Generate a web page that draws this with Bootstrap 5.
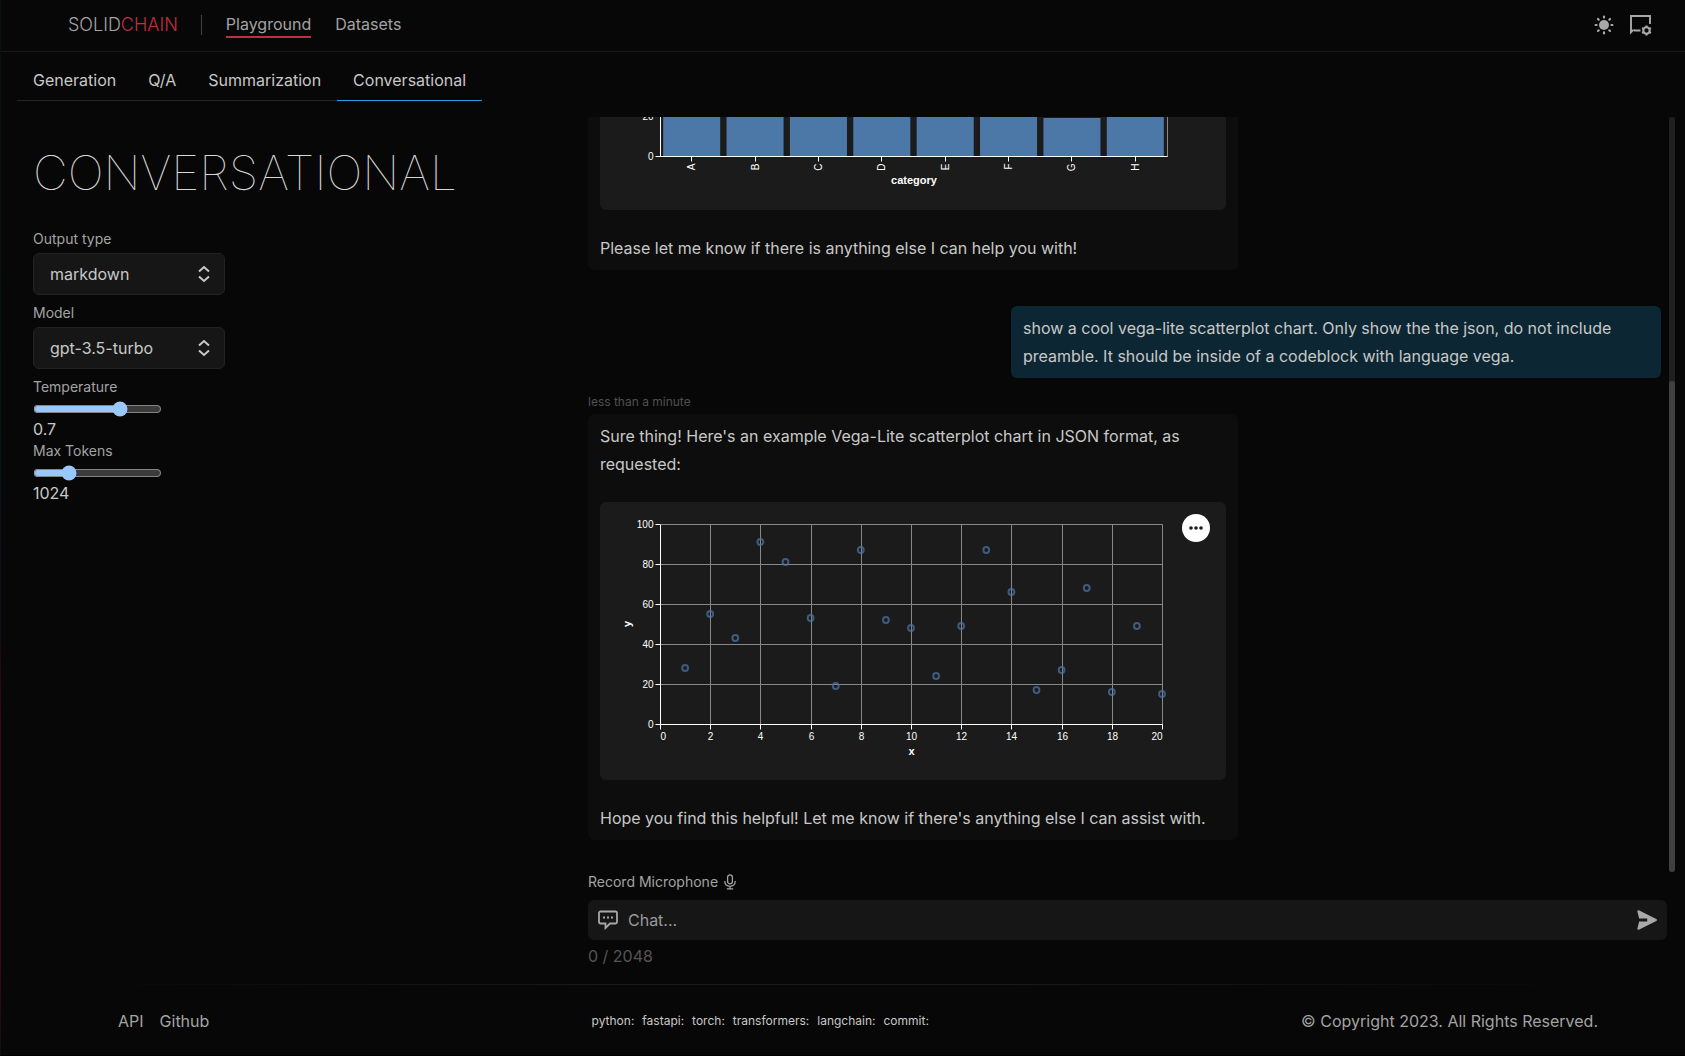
<!DOCTYPE html>
<html lang="en" data-bs-theme="dark">
<head>
<meta charset="utf-8">
<meta name="viewport" content="width=device-width, initial-scale=1">
<title>SolidChain - Conversational</title>
<link href="https://cdn.jsdelivr.net/npm/bootstrap@5.3.0/dist/css/bootstrap.min.css" rel="stylesheet">
<style>
  :root { color-scheme: dark; }
  body {
    background: #070707;
    color: #c8c8c8;
    font-family: Inter, "Liberation Sans", sans-serif;
    font-size: 16px;
    line-height: 24px;
    border-bottom: 1px solid #000;
  }
  .edge-glow {
    width: 1px; left: 0; top: 0; bottom: 0;
    background: linear-gradient(#04120a 0%, #04120a 25%, #06141e 45%, #140a1c 60%, #3a0714 68%, #3a0714 92%, #14100a 100%);
  }
  a { color: inherit; text-decoration: none; }
  .site-header { height: 52px; border-bottom: 1px solid #191919; padding: 0 33px 1px 68px; color: #a3a3a3; }
  .brand { font-size: 18px; font-weight: 300; }
  .brand span { color: #be2f45; }
  .divider { width: 1px; height: 20px; background: #444; margin: 0 24px 0 23px; }
  .site-nav { gap: 24px; }
  .site-nav a { border-bottom: 2px solid transparent; }
  .site-nav a.active { border-color: #be2f45; }
  .icon-btn { background: none; border: 0; padding: 0; color: #a8a8a8; display: flex; }
  .shell { padding-left: 17px; min-height: 0; }
  .mode-tabs a { padding: 16px 16px 8px; border-bottom: 1px solid #262626; display: block; height: 49px; }
  .mode-tabs a.active { border-color: #1fa2e5; }
  .page-title { font-size: 48px; line-height: 48px; font-weight: 100; margin: 48px 0 32px; color: #d8d8d8; }
  .controls { padding: 0 16px; }
  .field-label { font-size: 14px; line-height: 20px; color: #a3a3a3; display: block; }
  .picker {
    appearance: none; width: 192px; height: 42px; padding: 0 16px; margin: 4px 0 8px;
    border: 1px solid #232323; border-radius: 6px; color: #c8c8c8; background: #161616; display: block;
  }
  .picker-wrap { position: relative; width: 192px; }
  .picker-wrap svg { position: absolute; right: 15px; top: 12px; pointer-events: none; }
  input[type=range] { width: 129px; height: 16px; margin: 4px 0 0; display: block; }
  .chat-col { padding: 65px 10px 0 15px; }
  .thread-frame { min-height: 0; flex: 1 1 0; gap: 8px; }
  .thread-scroll { display: flex; flex-direction: column-reverse; overflow-y: scroll; flex: 1; scrollbar-width: none; }
  .scroll-track { width: 6px; background: #202020; border-radius: 3px; display: flex; align-items: end; }
  .scroll-thumb { width: 6px; height: 65%; background: #404040; border-radius: 3px; }
  .thread { min-height: 1161px; padding-bottom: 32px; flex-shrink: 0; }
  .bubble { width: 100%; max-width: 650px; padding: 8px 12px; border-radius: 6px; background: #0d0d0d; line-height: 28px; }
  .bubble p { margin: 0; }
  .bubble-user { background: #0c2733; }
  .stamp { font-size: 12px; line-height: 24px; height: 36px; padding-top: 12px; color: #505050; }
  .chart { position: relative; background: #1b1b1b; border-radius: 6px; margin: 24px 0; overflow: hidden; }
  .chart svg { display: block; width: 100%; height: auto; font-family: "Liberation Sans", sans-serif; }
  .chart-menu { position: absolute; top: 12px; right: 16px; width: 28px; height: 28px; border-radius: 50%; border: 0; padding: 0 7px; background: #fff; display: flex; align-items: center; justify-content: center; }
  .record { gap: 6px; }
  .composer { background: #161616; border-radius: 6px; height: 40px; padding: 0 10px; margin: 8px 8px 4px 0; }
  .composer input { background: none; border: 0; outline: 0; color: #c8c8c8; padding: 0; margin: 0 10px; min-width: 0; flex: 1; }
  .composer input::placeholder { color: #9a9a9a; opacity: 1; }
  .counter { color: #555; line-height: 24px; margin-bottom: 16px; }
  .foot-rule { height: 1px; background: linear-gradient(90deg, transparent 5%, #191919 35%, #191919 60%, transparent 95%); }
  .site-footer { height: 70px; padding: 2px 87px 0 118px; color: #a3a3a3; }
  .versions { font-size: 12px; gap: 8px; color: #c8c8c8; margin-left: 10px; }
</style>
</head>
<body class="vh-100 d-flex flex-column overflow-hidden position-relative">
<div class="edge-glow position-absolute"></div>

<header class="site-header d-flex align-items-center flex-shrink-0">
  <a class="brand" href="#">SOLID<span>CHAIN</span></a>
  <div class="divider"></div>
  <nav class="site-nav d-flex">
    <a class="active" href="#">Playground</a>
    <a href="#">Datasets</a>
  </nav>
  <div class="ms-auto d-flex align-items-center gap-3">
    <button class="icon-btn" type="button" aria-label="Toggle theme">
      <svg width="20" height="20" viewBox="0 0 20 20" fill="currentColor"><circle cx="10" cy="10" r="5"/><g stroke="currentColor" stroke-width="2.200" stroke-linecap="round"><path d="M10 1.600v1M10 17.400v1M1.600 10h1M17.400 10h1M4 4l.7.7M15.3 15.3l.7.7M16 4l-.7.7M4.700 15.3L4 16"/></g></svg>
    </button>
    <button class="icon-btn" type="button" aria-label="Chat settings">
      <svg width="22" height="22" viewBox="0 0 22 22" fill="none" stroke="currentColor" stroke-width="1.900"><path d="M20 10V2H1v15M4 16.500h6.500"/><path d="M0 15.600h5L0 20.500z" fill="currentColor" stroke="none"/><circle cx="16.500" cy="16.500" r="3.200" stroke-width="2.100"/><path stroke-width="2.200" d="M16.500 11.400v2M16.500 19.600v2M12.100 14l1.600.9M19.300 18.100l1.600.9M12.100 19l1.600-.9M19.300 14.900l1.600-.9"/></svg>
    </button>
  </div>
</header>

<main class="shell row g-0 flex-grow-1">
  <section class="col-4">
    <nav class="mode-tabs d-inline-flex">
      <a href="#">Generation</a><a href="#">Q/A</a><a href="#">Summarization</a><a class="active" href="#">Conversational</a>
    </nav>
    <form class="controls">
      <h1 class="page-title">CONVERSATIONAL</h1>
      <label class="field-label" for="out">Output type</label>
      <div class="picker-wrap">
        <select class="picker" id="out"><option>markdown</option></select>
        <svg width="12" height="18" viewBox="0 0 12 18" fill="none" stroke="#c8c8c8" stroke-width="2"><path d="M1 6.500l5-4.500 5 4.500M1 11.500l5 4.500 5-4.500"/></svg>
      </div>
      <label class="field-label" for="model">Model</label>
      <div class="picker-wrap">
        <select class="picker" id="model"><option>gpt-3.5-turbo</option></select>
        <svg width="12" height="18" viewBox="0 0 12 18" fill="none" stroke="#c8c8c8" stroke-width="2"><path d="M1 6.500l5-4.500 5 4.500M1 11.500l5 4.500 5-4.500"/></svg>
      </div>
      <label class="field-label" for="temp">Temperature</label>
      <input type="range" id="temp" min="0" max="1" step="0.1" value="0.7">
      <output class="d-block" for="temp">0.7</output>
      <label class="field-label" for="tokens">Max Tokens</label>
      <input type="range" id="tokens" min="0" max="4096" value="1024">
      <output class="d-block" for="tokens">1024</output>
    </form>
  </section>

  <section class="chat-col col-8 d-flex flex-column h-100">
    <div class="thread-frame d-flex">
      <div class="thread-scroll">
        <div class="thread d-flex flex-column justify-content-end">
          <article class="bubble">
            <div class="chart"><svg id="bars" viewBox="0 0 626 276"></svg></div>
            <p>Please let me know if there is anything else I can help you with!</p>
          </article>
          <div class="stamp"></div>
          <article class="bubble bubble-user align-self-end">
            <p>show a cool vega-lite scatterplot chart. Only show the the json, do not include preamble. It should be inside of a codeblock with language vega.</p>
          </article>
          <div class="stamp">less than a minute</div>
          <article class="bubble">
            <p>Sure thing! Here's an example Vega-Lite scatterplot chart in JSON format, as requested:</p>
            <div class="chart">
              <svg id="scatter" viewBox="0 0 626 278"></svg>
              <button class="chart-menu" type="button" aria-label="Chart actions"><svg viewBox="0 0 14 4"><g fill="#1b1e23"><circle cx="2" cy="2" r="1.800"/><circle cx="7" cy="2" r="1.800"/><circle cx="12" cy="2" r="1.800"/></g></svg></button>
            </div>
            <p>Hope you find this helpful! Let me know if there's anything else I can assist with.</p>
          </article>
        </div>
      </div>
      <div class="scroll-track" aria-hidden="true"><div class="scroll-thumb"></div></div>
    </div>
    <form>
      <button class="icon-btn record field-label d-flex align-items-center" type="button">Record Microphone
        <svg width="12" height="16" viewBox="0 0 12 16" fill="none" stroke="currentColor" stroke-width="1.300"><rect x="3.600" y=".8" width="4.800" height="9" rx="2.400"/><path d="M.8 7v.6c0 2.800 2.200 4.700 5.200 4.700s5.200-1.900 5.200-4.700V7M6 12.300v2.500M2.800 14.900h6.400"/></svg>
      </button>
      <div class="composer d-flex align-items-center">
        <svg width="20" height="20" viewBox="0 0 20 20" fill="none" stroke="#a8a8a8" stroke-width="1.800"><path d="M2.500 1.500h15a1.500 1.500 0 0 1 1.500 1.500v9a1.500 1.500 0 0 1-1.500 1.500h-5.500l-4.500 4.500v-4.500h-5a1.500 1.500 0 0 1-1.500-1.500V3a1.500 1.500 0 0 1 1.500-1.500z"/><path d="M5 7.500h2M9 7.500h2M13 7.500h2"/></svg>
        <input type="text" placeholder="Chat..." aria-label="Chat message">
        <button class="icon-btn" type="submit" aria-label="Send"><svg width="20" height="20" viewBox="0 0 20 20" fill="currentColor"><path d="M.4 1.400C.2.500 1 0 1.800.3l17.500 8.600c.9.500.9 1.700 0 2.200L1.800 19.700C1 20 .2 19.500.4 18.600l1.700-7.100h8.100V8.500H2.100z"/></svg></button>
      </div>
      <div class="counter">0 / 2048</div>
    </form>
  </section>
</main>

<div class="foot-rule flex-shrink-0"></div>
<footer class="site-footer d-flex align-items-center justify-content-between flex-shrink-0">
  <nav class="d-flex gap-3"><a href="#">API</a><a href="#">Github</a></nav>
  <div class="versions d-flex"><span>python:</span><span>fastapi:</span><span>torch:</span><span>transformers:</span><span>langchain:</span><span>commit:</span></div>
  <div>© Copyright 2023. All Rights Reserved.</div>
</footer>

<script src="https://cdn.jsdelivr.net/npm/bootstrap@5.3.0/dist/js/bootstrap.bundle.min.js"></script>
<script>
  const L = 60.5, T = 22.5, B = 222.5;
  const line = (x1, y1, x2, y2, c) => `<line x1="${x1}" y1="${y1}" x2="${x2}" y2="${y2}" stroke="${c}"/>`;
  const text = (x, y, s, extra = '') => `<text x="${x}" y="${y}" fill="#fff" font-size="10" ${extra}>${s}</text>`;
  const bold = 'font-size="11" font-weight="bold" text-anchor="middle"';
  const title = (x, y, s, extra = '') => `<text x="${x}" y="${y}" fill="#fff" ${bold} ${extra}>${s}</text>`;
  const yAxis = (right, top) => {
    let out = '';
    for (let v = 0; v <= top; v += 20) {
      const y = B - v * 2;
      out += line(L, y, right, y, '#888') + line(L - 5, y, L, y, '#fff') + text(L - 7, y + 3, v, 'text-anchor="end"');
    }
    return out;
  };

  const bars = [['A', 28], ['B', 55], ['C', 43], ['D', 91], ['E', 81], ['F', 53], ['G', 19], ['H', 87]];
  const BR = 567.5, step = (BR - L) / 8;
  let b = yAxis(BR, 20) + line(BR, T, BR, B, '#888');
  bars.forEach(([k, v], i) => {
    const x = L + i * step, c = Math.floor(x + step / 2 - .5) + .5;
    b += `<rect x="${x + step * .05 - .5}" y="${B - v * 2 - .5}" width="${step * .9}" height="${v * 2}" fill="#4c78a8"/>`;
    b += line(c, B, c, B + 5, '#fff') + text(0, 0, k, `text-anchor="end" transform="translate(${c + 3} ${B + 7}) rotate(-90)"`);
  });
  b += line(L, T, L, B, '#fff') + line(L, B, BR, B, '#fff') + title((L + BR) / 2, 250, 'category');
  document.getElementById('bars').innerHTML = b;

  const ys = [28, 55, 43, 91, 81, 53, 19, 87, 52, 48, 24, 49, 87, 66, 17, 27, 68, 16, 49, 15];
  const SR = 562.5, ux = (SR - L) / 20;
  let s = yAxis(SR, 100);
  for (let v = 0; v <= 20; v += 2) {
    const x = Math.round(L + v * ux - .5) + .5;
    s += line(x, T, x, B, '#888') + line(x, B, x, B + 5, '#fff');
    s += text(v === 0 ? L : v === 20 ? SR : x, B + 15, v, `text-anchor="${v === 0 ? 'start' : v === 20 ? 'end' : 'middle'}"`);
  }
  s += line(L, T, L, B, '#fff') + line(L, B, SR, B, '#fff');
  ys.forEach((v, i) => { s += `<circle cx="${L + (i + 1) * ux - .5}" cy="${B - v * 2 - .5}" r="2.900" fill="none" stroke="#4c78a8" stroke-width="2" opacity=".7"/>`; });
  s += title((L + SR) / 2, 253, 'x') + title(0, 0, 'y', 'transform="translate(31 122) rotate(-90)"');
  document.getElementById('scatter').innerHTML = s;
</script>
</body>
</html>
